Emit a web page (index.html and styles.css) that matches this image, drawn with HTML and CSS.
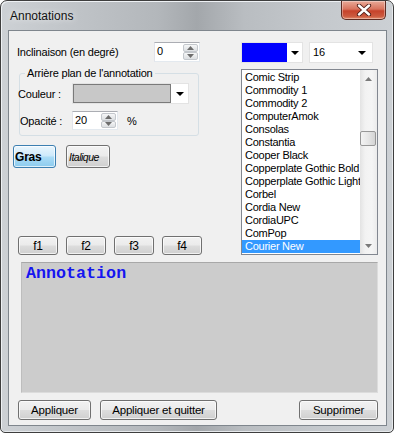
FILE: index.html
```html
<!DOCTYPE html>
<html lang="fr">
<head>
<meta charset="utf-8">
<title>Annotations</title>
<link rel="stylesheet" href="styles.css">
</head>
<body>
<div class="window">
  <div class="titlebar">
    <span class="title">Annotations</span>
    <div class="close">
      <svg width="16" height="12" viewBox="0 0 16 12"><path d="M3 1.5 L13 10.5 M13 1.5 L3 10.5" stroke="#4a1a14" stroke-width="4.2" stroke-linecap="round"/><path d="M3 1.5 L13 10.5 M13 1.5 L3 10.5" stroke="#ffffff" stroke-width="2.4" stroke-linecap="round"/></svg>
    </div>
  </div>
  <div class="client">
    <div class="top">
      <div class="left">
        <div class="row row-incl">
          <span class="lbl lbl-incl">Inclinaison (en degré)</span>
          <div class="spin spin-incl">
            <span class="spin-val">0</span>
            <div class="spin-btns">
              <div class="sb"><svg width="7" height="4" viewBox="0 0 7 4"><polygon points="0,4 7,4 3.5,0" fill="#6d6d6d"/></svg></div>
              <div class="sb"><svg width="7" height="4" viewBox="0 0 7 4"><polygon points="0,0 7,0 3.5,4" fill="#6d6d6d"/></svg></div>
            </div>
          </div>
        </div>
        <fieldset class="group">
          <legend>Arrière plan de l'annotation</legend>
          <div class="row row-col">
            <span class="lbl lbl-col">Couleur :</span>
            <div class="combo combo-gray">
              <div class="swatch swatch-gray"></div>
              <div class="drop"><svg width="8" height="4" viewBox="0 0 8 4"><polygon points="0,0 8,0 4,4" fill="#000"/></svg></div>
            </div>
          </div>
          <div class="row row-op">
            <span class="lbl lbl-op">Opacité :</span>
            <div class="spin spin-op">
              <span class="spin-val">20</span>
              <div class="spin-btns">
                <div class="sb"><svg width="7" height="4" viewBox="0 0 7 4"><polygon points="0,4 7,4 3.5,0" fill="#6d6d6d"/></svg></div>
                <div class="sb"><svg width="7" height="4" viewBox="0 0 7 4"><polygon points="0,0 7,0 3.5,4" fill="#6d6d6d"/></svg></div>
              </div>
            </div>
            <span class="pct">%</span>
          </div>
        </fieldset>
        <div class="row style-row">
          <button class="btn gras">Gras</button>
          <button class="btn ital">Italique</button>
        </div>
        <div class="row f-row">
          <button class="btn fbtn">f1</button>
          <button class="btn fbtn">f2</button>
          <button class="btn fbtn">f3</button>
          <button class="btn fbtn">f4</button>
        </div>
      </div>
      <div class="right">
        <div class="row combos">
          <div class="combo combo-color">
            <div class="swatch swatch-blue"></div>
            <div class="drop"><svg width="8" height="4" viewBox="0 0 8 4"><polygon points="0,0 8,0 4,4" fill="#000"/></svg></div>
          </div>
          <div class="combo combo-size">
            <span class="combo-text">16</span>
            <div class="drop"><svg width="8" height="4" viewBox="0 0 8 4"><polygon points="0,0 8,0 4,4" fill="#000"/></svg></div>
          </div>
        </div>
        <div class="listbox">
          <ul class="items">
            <li>Comic Strip</li>
            <li>Commodity 1</li>
            <li>Commodity 2</li>
            <li>ComputerAmok</li>
            <li>Consolas</li>
            <li>Constantia</li>
            <li>Cooper Black</li>
            <li>Copperplate Gothic Bold</li>
            <li>Copperplate Gothic Light</li>
            <li>Corbel</li>
            <li>Cordia New</li>
            <li>CordiaUPC</li>
            <li>ComPop</li>
            <li class="sel">Courier New</li>
          </ul>
          <div class="vscroll">
            <div class="sarrow"><svg width="7" height="4" viewBox="0 0 7 4"><polygon points="0,4 7,4 3.5,0" fill="#7a7a7a"/></svg></div>
            <div class="strack">
              <div class="thumb"></div>
            </div>
            <div class="sarrow"><svg width="7" height="4" viewBox="0 0 7 4"><polygon points="0,0 7,0 3.5,4" fill="#7a7a7a"/></svg></div>
          </div>
        </div>
      </div>
    </div>
    <div class="textarea"><span class="annot">Annotation</span></div>
    <div class="row bottom">
      <button class="btn b-app">Appliquer</button>
      <button class="btn b-appq">Appliquer et quitter</button>
      <button class="btn b-sup">Supprimer</button>
    </div>
  </div>
</div>
</body>
</html>
```

FILE: styles.css
```css
* { box-sizing: border-box; }
html, body { margin: 0; padding: 0; }
body {
  background: #ffffff;
  font-family: "Liberation Sans", Arial, sans-serif;
  font-size: 11px;
  letter-spacing: -0.2px;
  color: #000;
  width: 396px;
  height: 435px;
  overflow: hidden;
}
.window {
  width: 394px;
  height: 433px;
  border: 1px solid #3e3e3e;
  border-radius: 7px 7px 5px 5px;
  padding: 0 6px 6px 7px;
  background: linear-gradient(90deg, #cdd1d5 0%, #bfc3c7 20%, #b3b7bb 40%, #a3a7ab 50%, #b9bdc1 62%, #c4c8cc 80%, #ccd0d4 100%);
  box-shadow: inset 1px 1px 0 #eef1f4, inset -1px -1px 0 #e6e9ec;
  display: flex;
  flex-direction: column;
}
.titlebar {
  height: 29px;
  display: flex;
  align-items: flex-start;
}
.title {
  font-size: 12px;
  letter-spacing: 0;
  margin-left: 2px;
  margin-top: 8px;
  color: #111;
  text-shadow: 0 0 6px rgba(255,255,255,0.9);
}
.close {
  margin-left: auto;
  margin-right: 1px;
  width: 45px;
  height: 19px;
  border: 1px solid #5e2b22;
  border-top: none;
  border-radius: 0 0 5px 5px;
  background: linear-gradient(180deg, #e9aa98 0%, #d8735d 45%, #c6422b 55%, #cc5a3f 85%, #e28c6c 100%);
  box-shadow: inset 0 0 0 1px rgba(255,255,255,0.35);
  display: flex;
  align-items: center;
  justify-content: center;
}
.client {
  flex: 1;
  border: 1px solid #7f868d;
  background: #f0f0f0;
  display: flex;
  flex-direction: column;
}
.row { display: flex; align-items: center; }
.top { display: flex; margin-top: 10px; height: 214px; }
.left { width: 232px; display: flex; flex-direction: column; }
.right { width: 137px; display: flex; flex-direction: column; }
.lbl { white-space: nowrap; }

.row-incl { margin-top: 1px; height: 20px; }
.lbl-incl { margin-left: 8px; width: 137px; }

.spin {
  display: flex;
  align-items: stretch;
  background: #fff;
  border: 1px solid #abadb3;
  border-color: #abadb3 #e3e9ef #e3e9ef #e2e3ea;
}
.spin-incl { width: 46px; height: 20px; }
.spin-op { width: 46px; height: 19px; }
.spin-val { flex: 1; padding-left: 2px; line-height: 17px; }
.spin-btns { width: 16px; display: flex; flex-direction: column; padding: 1px 1px 1px 0; }
.sb {
  flex: 1;
  border: 1px solid #c3c7cc;
  border-radius: 2px;
  background: linear-gradient(180deg, #f6f7f8 0%, #e8eaec 50%, #dde0e3 100%);
  display: flex;
  align-items: center;
  justify-content: center;
}

.group {
  margin: 4px 0 0 10px;
  padding: 0 0 5px 0;
  width: 180px;
  border: 1px solid #d5dfe5;
  border-radius: 3px;
  min-width: 0;
}
.group legend {
  margin-left: 5px;
  padding: 0 2px;
  line-height: 14px;
  height: 14px;
}
.row-col { margin-top: 3px; height: 21px; }
.lbl-col { margin-left: -2px; width: 54px; }
.combo {
  display: flex;
  background: #fff;
  border: 1px solid #e3e3e3;
}
.combo-gray { width: 117px; height: 21px; }
.swatch-gray { flex: 1; background: #c8c8c8; border: 1px solid #7a7a7a; }
.drop { width: 17px; display: flex; align-items: center; justify-content: center; }
.row-op { margin-top: 7px; height: 19px; }
.lbl-op { width: 52px; }
.pct { margin-left: 9px; }

.style-row { margin-top: 9px; height: 23px; }
.btn {
  font-family: "Liberation Sans", Arial, sans-serif;
  font-size: 11px;
  letter-spacing: -0.2px;
  color: #000;
  padding: 0;
  border: 1px solid #707070;
  border-radius: 3px;
  background: linear-gradient(180deg, #f2f2f2 0%, #ebebeb 48%, #dddddd 52%, #cfcfcf 100%);
  box-shadow: inset 0 0 0 1px rgba(255,255,255,0.7);
}
.gras {
  margin-left: 4px;
  width: 43px;
  height: 23px;
  font-weight: bold;
  font-size: 12px;
  text-align: left;
  padding-left: 1px;
  border-color: #3c7fb1;
  background: linear-gradient(180deg, #eaf6fd 0%, #cfeafb 45%, #a9dbf6 55%, #8ccbee 100%);
}
.ital {
  margin-left: 10px;
  width: 44px;
  height: 23px;
  font-style: italic;
  font-size: 10.5px;
  text-align: left;
  padding-left: 2px;
  letter-spacing: -0.5px;
}
.f-row { margin-top: 68px; height: 19px; margin-left: 9px; gap: 8px; }
.fbtn { width: 40px; height: 19px; font-size: 12px; }

.combos { margin-top: 1px; height: 21px; }
.combo-color { width: 62px; height: 21px; }
.swatch-blue { width: 45px; background: #0000fe; }
.combo-color .drop { flex: 1; }
.combo-size { width: 64px; height: 21px; margin-left: 6px; }
.combo-text { flex: 1; padding-left: 3px; line-height: 19px; letter-spacing: 0; }
.combo-size .drop { width: 20px; }

.listbox {
  margin-top: 6px;
  height: 186px;
  border: 1px solid #828790;
  background: #fff;
  display: flex;
}
.items {
  list-style: none;
  margin: 0;
  padding: 1px 0 0 0;
  width: 118px;
  overflow: hidden;
  font-size: 11px;
  letter-spacing: -0.25px;
}
.items li {
  height: 13px;
  line-height: 13px;
  padding-left: 3px;
  white-space: nowrap;
}
.items li.sel { background: #3399ff; color: #fff; }
.vscroll {
  width: 17px;
  display: flex;
  flex-direction: column;
  background: linear-gradient(90deg, #e3e3e3 0%, #f2f2f2 30%, #f5f5f5 70%, #ebebeb 100%);
}
.sarrow { height: 17px; display: flex; align-items: center; justify-content: center; }
.strack { flex: 1; padding-top: 44px; }
.thumb {
  height: 15px;
  margin: 0 1px 0 0;
  border: 1px solid #979797;
  border-radius: 2px;
  background: linear-gradient(90deg, #f3f3f3 0%, #e6e6e6 50%, #d4d4d4 100%);
}

.textarea {
  margin: 7px 0 0 12px;
  width: 357px;
  height: 131px;
  background: #cccccc;
  border: 1px solid #b0b0b0;
  border-color: #a8a8a8 #dcdcdc #dcdcdc #bdbdbd;
  padding: 2px 0 0 4px;
}
.annot {
  font-family: "Liberation Mono", "Courier New", monospace;
  font-size: 16.7px;
  letter-spacing: 0;
  color: #1515f0;
  font-weight: bold;
  line-height: 18px;
}
.bottom { margin-top: 7px; height: 20px; }
.bottom .btn { height: 20px; font-size: 11.5px; }
.b-app { margin-left: 9px; width: 73px; }
.b-appq { margin-left: 9px; width: 117px; }
.b-sup { margin-left: auto; margin-right: 8px; width: 79px; }
```
